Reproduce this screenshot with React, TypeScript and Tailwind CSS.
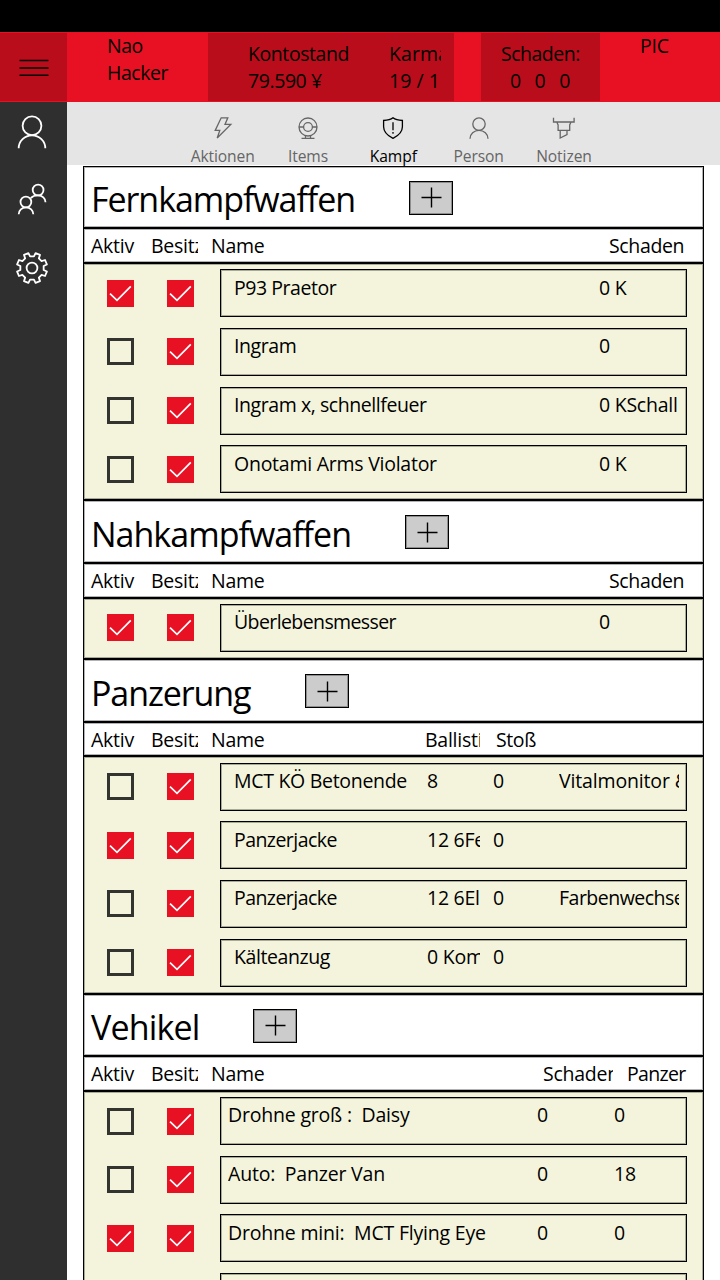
import type { ReactNode } from 'react'

type Cell = [text: string, className: string]
type Row = { active: boolean; owned: boolean; pad: string; cells: Cell[] }
type Section = { title: string; titleWidth: string; head: Cell[]; rows: Row[] }

const frame = 'border border-black shadow-[inset_0_0_0_1px_rgba(0,0,0,0.3)]'

const weapon = (active: boolean, name: string, damage: string, tracking: string): Row => ({
  active,
  owned: true,
  pad: 'pl-[13px]',
  cells: [
    [name, `w-[365px] ${tracking}`],
    [damage, 'w-[80px]'],
  ],
})

const armor = (active: boolean, name: string, ballistic: string, impact: string, note: string, tracking: string): Row => ({
  active,
  owned: true,
  pad: 'pl-[13px]',
  cells: [
    [name, `w-[193px] ${tracking}`],
    [ballistic, 'w-[53px] mr-[13px]'],
    [impact, 'w-[66px]'],
    [note, note.startsWith('Farben') ? 'w-[120px] tracking-[-0.5px]' : 'w-[120px] tracking-[-0.15px]'],
  ],
})

const vehicle = (active: boolean, name: string, damage: string, plating: string): Row => ({
  active,
  owned: true,
  pad: 'pl-[7px]',
  cells: [
    [name, 'w-[309px] tracking-[-0.2px]'],
    [damage, 'w-[77px]'],
    [plating, 'w-[60px]'],
  ],
})

const weaponHead: Cell[] = [
  ['Name', 'w-[398px]'],
  ['Schaden', 'w-[80px] tracking-[-0.35px]'],
]

const sections: Section[] = [
  {
    title: 'Fernkampfwaffen',
    titleWidth: 'w-[318px] tracking-[-1.06px]',
    head: weaponHead,
    rows: [
      weapon(true, 'P93 Praetor', '0 K', 'tracking-[-0.45px]'),
      weapon(false, 'Ingram', '0', 'tracking-[-0.4px]'),
      weapon(false, 'Ingram x, schnellfeuer', '0 KSchall', 'tracking-[-0.43px]'),
      weapon(false, 'Onotami Arms Violator', '0 K', 'tracking-[-0.25px]'),
    ],
  },
  {
    title: 'Nahkampfwaffen',
    titleWidth: 'w-[314px] tracking-[-0.99px]',
    head: weaponHead,
    rows: [weapon(true, 'Überlebensmesser', '0', 'tracking-[-0.6px]')],
  },
  {
    title: 'Panzerung',
    titleWidth: 'w-[214px] tracking-[-1.1px]',
    head: [
      ['Name', 'w-[214px]'],
      ['Ballistik', 'w-[55px] mr-[16px]'],
      ['Stoß', 'w-[80px] tracking-[-0.4px]'],
    ],
    rows: [
      armor(false, 'MCT KÖ Betonende', '8', '0', 'Vitalmonitor & Sensor', 'tracking-[-0.3px]'),
      armor(true, 'Panzerjacke', '12 6Feuer', '0', '', 'tracking-[-0.55px]'),
      armor(false, 'Panzerjacke', '12 6Elektro', '0', 'Farbenwechsel', 'tracking-[-0.55px]'),
      armor(false, 'Kälteanzug', '0 Komfort', '0', '', 'tracking-[-0.42px]'),
    ],
  },
  {
    title: 'Vehikel',
    titleWidth: 'w-[162px] tracking-[-0.85px]',
    head: [
      ['Name', 'w-[332px]'],
      ['Schaden', 'w-[70px] mr-[14px]'],
      ['Panzer', 'w-[64px] tracking-[-0.65px]'],
    ],
    rows: [
      vehicle(false, 'Drohne groß :  Daisy', '0', '0'),
      vehicle(false, 'Auto:  Panzer Van', '0', '18'),
      vehicle(true, 'Drohne mini:  MCT Flying Eye', '0', '0'),
      vehicle(false, '', '', ''),
    ],
  },
]

function Cells({ cells }: { cells: Cell[] }) {
  return (
    <>
      {cells.map(([text, className], i) => (
        <span key={i} className={`block shrink-0 overflow-hidden whitespace-pre ${className}`}>
          {text}
        </span>
      ))}
    </>
  )
}

function Check({ on }: { on: boolean }) {
  if (!on) return <div className="h-[27px] w-[27px] shrink-0 border-[3px] border-[#33332f]" />
  return (
    <div className="h-[27px] w-[27px] shrink-0 bg-[#e81123]">
      <svg viewBox="0 0 27 27" className="h-full w-full" fill="none" stroke="#fff" strokeWidth="1.7">
        <path d="M3 13.6 10 20.4 23.8 6.4" />
      </svg>
    </div>
  )
}

function ItemRow({ row }: { row: Row }) {
  return (
    <div className="flex h-[58.67px] shrink-0 items-start">
      <div className="flex h-[48px] w-[136px] items-center gap-[33px] pl-[22.7px]">
        <Check on={row.active} />
        <Check on={row.owned} />
      </div>
      <div className={`flex h-[48px] w-[466.7px] overflow-hidden pt-[4.3px] ${frame} ${row.pad}`}>
        <Cells cells={row.cells} />
      </div>
    </div>
  )
}

function SectionTable({ section }: { section: Section }) {
  return (
    <section className="flex shrink-0 flex-col">
      <div className={`flex h-[62.67px] items-start bg-white pl-[7px] ${frame}`}>
        <h2 className={`mt-[9.7px] text-[34px] leading-[46px] ${section.titleWidth}`}>{section.title}</h2>
        <button className="mt-[14.2px] flex h-[34px] w-[44.4px] items-center justify-center border border-black bg-[#ccc] shadow-[inset_0_0_0_1px_rgba(0,0,0,0.3)]">
          <svg width="21" height="21" viewBox="0 0 21 21" stroke="#000" strokeWidth="1.4">
            <path d="M.5 10.5h20M10.5.5v20" />
          </svg>
        </button>
      </div>
      <div className={`flex h-[34.67px] bg-white pt-[4.1px] pl-[7px] ${frame}`}>
        <span className="w-[60px] shrink-0">Aktiv</span>
        <span className="mr-[13px] w-[47px] shrink-0 overflow-hidden">Besitz</span>
        <Cells cells={section.head} />
      </div>
      <div className={`bg-[#f4f4dc] pt-[5.33px] pb-[0.67px] ${frame}`}>
        <div className="-mb-[5.33px]">
          {section.rows.map((row, i) => (
            <ItemRow key={i} row={row} />
          ))}
        </div>
      </div>
    </section>
  )
}

function gearPath() {
  const pts: string[] = []
  for (let i = 0; i < 8; i++) {
    const base = i * 45 + 22.5
    const corners: [number, number][] = [
      [-13, 11.8],
      [-9, 15.3],
      [9, 15.3],
      [13, 11.8],
    ]
    for (const [offset, r] of corners) {
      const a = ((base + offset) * Math.PI) / 180
      pts.push(`${(16 + r * Math.sin(a)).toFixed(2)} ${(16 - r * Math.cos(a)).toFixed(2)}`)
    }
  }
  return `M${pts.join('L')}Z`
}

function Tab({ label, active, children }: { label: string; active?: boolean; children: ReactNode }) {
  return (
    <div className={`flex w-[85.33px] flex-col items-center pt-[14px] ${active ? 'text-black' : 'text-[#666]'}`}>
      <svg width="24" height="24" viewBox="0 -0.2 24 24" fill="none" stroke="currentColor" strokeWidth="1.3" className="shrink-0 overflow-visible">
        {children}
      </svg>
      <span className="mt-[4.6px] text-[15.6px] leading-[22px] tracking-[-0.1px]">{label}</span>
    </div>
  )
}

export default function App() {
  return (
    <div className="flex h-[1280px] w-[720px] flex-col overflow-hidden bg-white font-['Open_Sans','Noto_Sans',sans-serif] text-[19.5px] leading-[26.67px] tracking-[-0.25px] text-black">
      <div className="h-[32px] shrink-0 bg-black" />
      <header className="flex h-[70px] shrink-0 bg-[#e81123] pt-[1px] pb-[1px]">
        <button className="flex w-[67px] items-center justify-center bg-[#ba0d1b] pt-[1px]">
          <svg width="30" height="18" viewBox="0 0 30 18" stroke="#000" strokeWidth="1.6">
            <path d="M.5 1.5h29M.5 9h29M.5 16.2h29" />
          </svg>
        </button>
        <div className="w-[141px] pl-[40px] tracking-[-0.45px]">
          <div>Nao</div>
          <div>Hacker</div>
        </div>
        <div className="flex w-[246px] bg-[#ba0d1b] pt-[8px] pl-[40px] tracking-[-0.42px]">
          <div className="w-[141px]">
            <div>Kontostand</div>
            <div>79.590 ¥</div>
          </div>
          <div className="w-[52px] overflow-hidden whitespace-nowrap tracking-[0.05px]">
            <div>Karma</div>
            <div>19 / 1</div>
          </div>
        </div>
        <div className="ml-[27px] w-[119px] bg-[#ba0d1b] pt-[8px] pl-[20px]">
          <div className="tracking-[-0.5px]">Schaden:</div>
          <div className="flex gap-[13.7px] pl-[9px]">
            <span>0</span>
            <span>0</span>
            <span>0</span>
          </div>
        </div>
        <div className="pl-[40px]">PIC</div>
      </header>
      <div className="flex min-h-0 flex-1">
        <aside className="flex w-[67px] shrink-0 flex-col bg-[#2f2f2f]">
          <svg width="64" height="200" viewBox="0 102 64 200" fill="none" stroke="#fff" strokeWidth="1.8">
            <circle cx="32" cy="125.8" r="9.4" />
            <path d="M18.7 148.2a13.3 12.9 0 0 1 26.6 0" />
            <circle cx="38.1" cy="190" r="5.4" />
            <circle cx="25.9" cy="202" r="5.4" />
            <path d="M18.7 214.2c0-4 3.2-6.8 7.3-6.8s7.3 2.8 7.3 6.8M30.8 198.2c1.5-1.8 4.2-2.8 7.2-2.8 4.3 0 7.5 2.8 7.5 6.8" />
            <g transform="translate(16 252)" strokeLinejoin="round">
              <path d={gearPath()} />
              <circle cx="16" cy="16" r="5.4" />
            </g>
          </svg>
        </aside>
        <main className="flex min-w-0 flex-1 flex-col">
          <nav className="flex h-[63px] shrink-0 bg-[#e5e5e5] pl-[113px]">
            <Tab label="Aktionen">
              <path d="M10.2 1.6h6.6L14 8.2h5.8L6.2 21.8l2.6-7.6H4.2Z" />
            </Tab>
            <Tab label="Items">
              <circle cx="12" cy="10.8" r="9" />
              <circle cx="12" cy="10.8" r="4.4" />
              <path d="M3 10.8h4.6M16.4 10.8H21M9.5 19.5v2.5M14.5 19.5v2.5M5.5 22.2h13" />
            </Tab>
            <Tab label="Kampf" active>
              <path d="M12 1.6c2.2 1.8 5.3 2.6 9.4 2.7v6.2c0 5-3.5 8.7-9.4 11.6-5.9-2.9-9.4-6.6-9.4-11.6V4.3C6.7 4.2 9.8 3.4 12 1.6Z" />
              <path d="M12 6v8M12 15.8v1.7" />
            </Tab>
            <Tab label="Person">
              <circle cx="12" cy="7.9" r="6.2" />
              <path d="M3 22.5a9 8.4 0 0 1 18 0" />
            </Tab>
            <Tab label="Notizen">
              <path d="M1.5 1.5v4.3h20.6V1.5M4.8 5.8l1.3 3v5.4h11.6V8.8l1.3-3M8.2 14.2v7.6l6.8-3.3v-4.3" />
            </Tab>
          </nav>
          <div className="mt-[0.7px] ml-[16px] flex min-h-0 w-[621px] flex-1 flex-col overflow-hidden">
            {sections.map((s) => (
              <SectionTable key={s.title} section={s} />
            ))}
          </div>
        </main>
      </div>
    </div>
  )
}
